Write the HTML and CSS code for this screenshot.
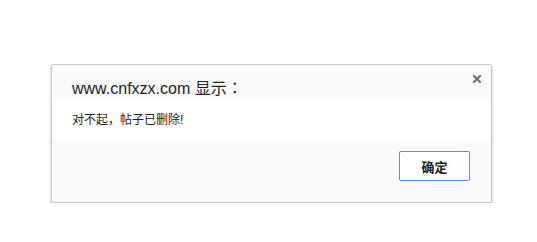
FILE: index.html
```html
<!DOCTYPE html>
<html lang="zh">
<head>
<meta charset="utf-8">
<title>提示</title>
<link rel="stylesheet" href="styles.css">
</head>
<body>
<div class="dialog">
  <div class="head">
    <div class="title">www.cnfxzx.com 显示<span class="punct" lang="zh-TW">：</span></div>
    <span class="close" aria-label="关闭">
      <svg width="8" height="8" viewBox="0 0 8 8"><path d="M1 1L7 7M7 1L1 7" stroke="#6e6e6e" stroke-width="2" stroke-linecap="square"/></svg>
    </span>
  </div>
  <div class="msg">对不起，帖子已删除!</div>
  <div class="foot">
    <button class="ok">确定</button>
  </div>
</div>
</body>
</html>
```
FILE: styles.css
```css
html, body {
  margin: 0;
  padding: 0;
  background: #ffffff;
}
body {
  font-family: "Liberation Sans", Arial, "Noto Sans CJK SC", sans-serif;
}
.dialog {
  position: relative;
  box-sizing: border-box;
  width: 441px;
  height: 139px;
  margin: 64px 0 0 51px;
  border: 1px solid #c9c9c9;
  border-radius: 2px;
  background: #fafafa;
  box-shadow: 0 2px 3px rgba(0, 0, 0, 0.28);
  display: flex;
  flex-direction: column;
}
.head {
  height: 33px;
  box-sizing: border-box;
  padding: 13px 0 0 20px;
}
.title {
  font-size: 16px;
  line-height: 19px;
  color: #222222;
  white-space: nowrap;
}
.punct {
  font-family: "Noto Sans CJK TC", sans-serif;
}
.close {
  position: absolute;
  top: 10px;
  right: 10px;
  width: 8px;
  height: 8px;
  display: block;
}
.close svg {
  display: block;
}
.msg {
  background: #ffffff;
  height: 42px;
  box-sizing: border-box;
  padding: 14px 0 0 20px;
  font-size: 12px;
  line-height: 16px;
  color: #222222;
  white-space: nowrap;
}
.foot {
  flex: 1;
  display: flex;
  justify-content: flex-end;
  align-items: flex-start;
  padding: 11px 21px 0 0;
}
.ok {
  width: 71px;
  height: 30px;
  box-sizing: border-box;
  border: 1px solid #4d90fe;
  border-radius: 2px;
  background: #ffffff;
  font-family: "Liberation Sans", Arial, "Noto Sans CJK SC", sans-serif;
  font-size: 13px;
  font-weight: bold;
  color: #222222;
  padding: 0;
}
```
